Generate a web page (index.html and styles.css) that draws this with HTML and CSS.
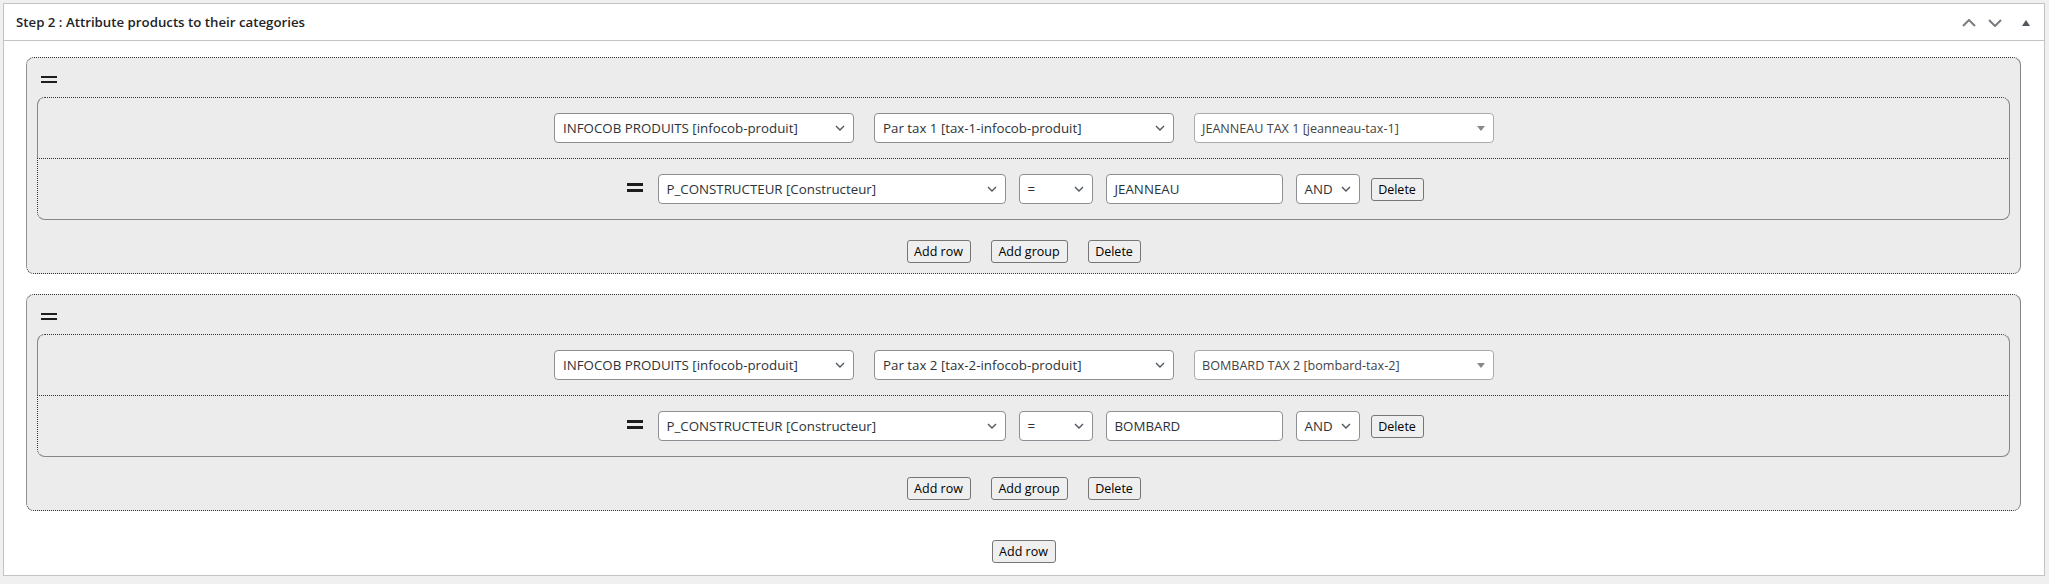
FILE: index.html
```html
<!DOCTYPE html>
<html lang="en">
<head>
<meta charset="utf-8">
<title>Step 2</title>
<link rel="stylesheet" href="styles.css">
</head>
<body>
<div class="postbox">
  <div class="postbox-header">
    <h2 class="title">Step 2 : Attribute products to their categories</h2>
    <div class="handle-actions">
      <svg class="ha-up" width="14" height="8" viewBox="0 0 14 8"><path d="M1 7L7 1L13 7" fill="none" stroke="#787c82" stroke-width="2"/></svg>
      <svg class="ha-down" width="14" height="8" viewBox="0 0 14 8"><path d="M1 1L7 7L13 1" fill="none" stroke="#787c82" stroke-width="2"/></svg>
      <svg class="ha-tri" width="8" height="6" viewBox="0 0 8 6"><path d="M0 6L4 0L8 6Z" fill="#50575e"/></svg>
    </div>
  </div>
  <div class="inside">

    <div class="group">
      <div class="group-head"><span class="drag"></span></div>
      <div class="row row-tax">
        <div class="select w-tax"><span>INFOCOB PRODUITS [infocob-produit]</span><svg width="10" height="6" viewBox="0 0 10 6"><path d="M1 1l4 4 4-4" fill="none" stroke="#50575e" stroke-width="1.4"/></svg></div>
        <div class="select w-tax"><span>Par tax 1 [tax-1-infocob-produit]</span><svg width="10" height="6" viewBox="0 0 10 6"><path d="M1 1l4 4 4-4" fill="none" stroke="#50575e" stroke-width="1.4"/></svg></div>
        <div class="select2 w-tax"><span>JEANNEAU TAX 1 [jeanneau-tax-1]</span><svg width="8" height="5" viewBox="0 0 8 5"><path d="M0 0H8L4 5Z" fill="#888"/></svg></div>
      </div>
      <div class="row row-cond">
        <span class="drag drag-row"></span>
        <div class="select w-field"><span>P_CONSTRUCTEUR [Constructeur]</span><svg width="10" height="6" viewBox="0 0 10 6"><path d="M1 1l4 4 4-4" fill="none" stroke="#50575e" stroke-width="1.4"/></svg></div>
        <div class="select w-op"><span>=</span><svg width="10" height="6" viewBox="0 0 10 6"><path d="M1 1l4 4 4-4" fill="none" stroke="#50575e" stroke-width="1.4"/></svg></div>
        <div class="input w-val">JEANNEAU</div>
        <div class="select w-and"><span>AND</span><svg width="10" height="6" viewBox="0 0 10 6"><path d="M1 1l4 4 4-4" fill="none" stroke="#50575e" stroke-width="1.4"/></svg></div>
        <button class="btn b-del-row">Delete</button>
      </div>
      <div class="group-actions">
        <button class="btn b-add-row">Add row</button>
        <button class="btn b-add-group">Add group</button>
        <button class="btn b-del">Delete</button>
      </div>
    </div>

    <div class="group">
      <div class="group-head"><span class="drag"></span></div>
      <div class="row row-tax">
        <div class="select w-tax"><span>INFOCOB PRODUITS [infocob-produit]</span><svg width="10" height="6" viewBox="0 0 10 6"><path d="M1 1l4 4 4-4" fill="none" stroke="#50575e" stroke-width="1.4"/></svg></div>
        <div class="select w-tax"><span>Par tax 2 [tax-2-infocob-produit]</span><svg width="10" height="6" viewBox="0 0 10 6"><path d="M1 1l4 4 4-4" fill="none" stroke="#50575e" stroke-width="1.4"/></svg></div>
        <div class="select2 w-tax"><span>BOMBARD TAX 2 [bombard-tax-2]</span><svg width="8" height="5" viewBox="0 0 8 5"><path d="M0 0H8L4 5Z" fill="#888"/></svg></div>
      </div>
      <div class="row row-cond">
        <span class="drag drag-row"></span>
        <div class="select w-field"><span>P_CONSTRUCTEUR [Constructeur]</span><svg width="10" height="6" viewBox="0 0 10 6"><path d="M1 1l4 4 4-4" fill="none" stroke="#50575e" stroke-width="1.4"/></svg></div>
        <div class="select w-op"><span>=</span><svg width="10" height="6" viewBox="0 0 10 6"><path d="M1 1l4 4 4-4" fill="none" stroke="#50575e" stroke-width="1.4"/></svg></div>
        <div class="input w-val">BOMBARD</div>
        <div class="select w-and"><span>AND</span><svg width="10" height="6" viewBox="0 0 10 6"><path d="M1 1l4 4 4-4" fill="none" stroke="#50575e" stroke-width="1.4"/></svg></div>
        <button class="btn b-del-row">Delete</button>
      </div>
      <div class="group-actions">
        <button class="btn b-add-row">Add row</button>
        <button class="btn b-add-group">Add group</button>
        <button class="btn b-del">Delete</button>
      </div>
    </div>

    <div class="main-actions">
      <button class="btn b-add-row">Add row</button>
    </div>
  </div>
</div>
</body>
</html>
```
FILE: styles.css
```css
* { box-sizing: border-box; }

body {
  margin: 0;
  background: #f0f0f1;
  font-family: "Open Sans", "Noto Sans", sans-serif;
  color: #2c3338;
}

.postbox {
  margin: 3px 4px 0 3px;
  border: 1px solid #c3c4c7;
  background: #fff;
}

.postbox-header {
  height: 37px;
  border-bottom: 1px solid #c3c4c7;
  display: flex;
  align-items: center;
  justify-content: space-between;
  padding-left: 12px;
}

.title {
  margin: 0;
  font-size: 13.25px;
  font-weight: 600;
  color: #1d2327;
}

.handle-actions {
  display: flex;
  align-items: center;
  padding-right: 14px;
  padding-top: 1px;
}

.ha-up { margin-right: 12px; }
.ha-down { margin-right: 20px; }

.inside {
  padding: 16px 23px 12px 22px;
}

.group {
  background: #ececec;
  border-width: 1px;
  border-style: dotted solid dotted dotted;
  border-color: #333 #858585 #333 #333;
  border-radius: 8px;
  padding: 0 10px 10px;
}

.group + .group { margin-top: 20px; }

.group-head {
  height: 39px;
  padding: 18px 0 0 4px;
}

.drag {
  display: block;
  width: 16px;
  height: 7px;
  border-top: 2px solid #1d1d1d;
  border-bottom: 2px solid #1d1d1d;
}

.drag-row {
  height: 9px;
  border-top-width: 3px;
  border-bottom-width: 3px;
  margin-right: 15px;
  margin-bottom: 4px;
}

.row {
  display: flex;
  justify-content: center;
  align-items: center;
  padding: 15px 0;
  border-width: 1px;
}

.row-tax {
  border-style: dotted solid none solid;
  border-color: #333 #858585 #858585 #858585;
  border-radius: 8px 8px 0 0;
  gap: 20px;
  padding-left: 1px;
}

.row-cond {
  border-style: dotted solid solid dotted;
  border-color: #333 #858585 #858585 #333;
  border-radius: 0 0 8px 8px;
  padding-left: 3px;
}

.select, .select2, .input {
  display: flex;
  align-items: center;
  justify-content: space-between;
  height: 30px;
  background: #fff;
  border: 1px solid #8c8f94;
  border-radius: 4px;
  padding: 0 8px;
  font-size: 13.3px;
  color: #2c3338;
  white-space: nowrap;
}

.select2 {
  border-color: #aaa;
  font-size: 12.6px;
  color: #444;
  padding-left: 7px;
}

.input { justify-content: flex-start; }

.w-tax { width: 300px; }
.w-field { width: 348px; margin-right: 13px; }
.w-op { width: 74px; margin-right: 13px; }
.w-val { width: 177px; margin-right: 13px; }
.w-and { width: 64px; margin-right: 11px; justify-content: flex-start; gap: 8px; }

.btn {
  height: 23px;
  padding: 0;
  border: 1px solid #767676;
  border-radius: 3px;
  background: #efefef;
  font-family: "Open Sans", "Noto Sans", sans-serif;
  font-size: 12.5px;
  color: #000;
}

.b-add-row { width: 64px; }
.b-add-group { width: 77px; }
.b-del, .b-del-row { width: 53px; }

.group-actions {
  display: flex;
  justify-content: center;
  gap: 20px;
  margin-top: 20px;
}

.main-actions {
  display: flex;
  justify-content: center;
  margin-top: 29px;
}
```
